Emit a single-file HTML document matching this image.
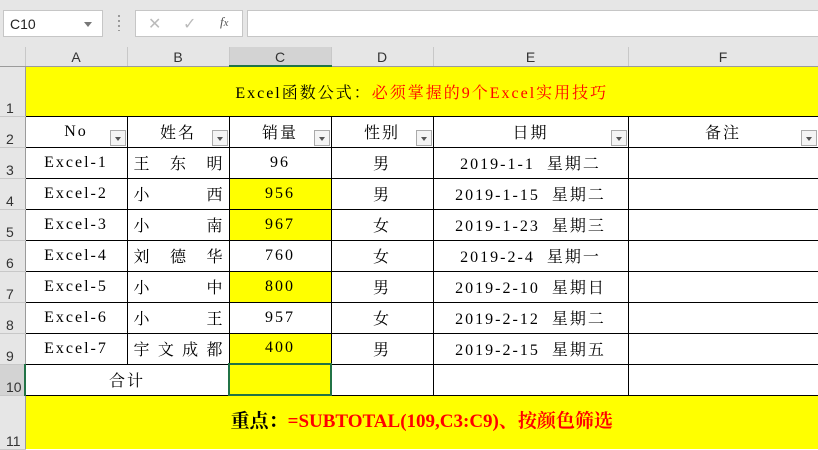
<!DOCTYPE html>
<html><head><meta charset="utf-8"><style>
*{margin:0;padding:0;box-sizing:border-box}
body{width:818px;height:449px;overflow:hidden;background:#fff;position:relative;font-family:"Liberation Serif","Noto Serif CJK SC",serif}
.top{position:absolute;left:0;top:0;width:818px;height:48px;background:#e6e6e6}
.nb{position:absolute;left:3px;top:10px;width:100px;height:27px;background:#fff;border:1px solid #c6c6c6;font:14px "Liberation Sans",sans-serif;padding:5px 0 0 6px;color:#222}
.nb:after{content:"";position:absolute;right:10px;top:11px;border:4px solid transparent;border-top:5px solid #777}
.dots{position:absolute;left:118px;top:15px;width:2px;height:16px;background:repeating-linear-gradient(#999 0 2px,transparent 2px 5px)}
.fb{position:absolute;left:135px;top:10px;width:108px;height:27px;background:#fff;border:1px solid #c6c6c6;color:#bbb;font:16px "Liberation Sans",sans-serif}
.fi{position:absolute;left:247px;top:10px;width:575px;height:27px;background:#fff;border:1px solid #c6c6c6}
table{position:absolute;left:0;top:47px;border-collapse:collapse;table-layout:fixed;width:818px}
td{font-size:16px;text-align:center;vertical-align:middle;white-space:nowrap;letter-spacing:2px;position:relative;padding:0}
.ch td{height:18px;background:#e6e6e6;font:14px "Liberation Sans",sans-serif;letter-spacing:0;color:#333;border-right:1px solid #c8c8c8;border-bottom:1px solid #9b9b9b;padding-top:2px}
.ch td.sel{background:#d3d3d3;border-bottom:2px solid #217346}
td.rh{background:#e6e6e6;font:14px "Liberation Sans",sans-serif;letter-spacing:0;color:#333;border-right:1px solid #9b9b9b;border-bottom:1px solid #c8c8c8;vertical-align:bottom;text-align:left;padding-left:6px}
td.rh.sel{background:#d3d3d3;border-right:2px solid #217346}
.d td.c{border:1px solid #000}
.y{background:#ff0}
.r{color:#f00}
.fl{position:absolute;right:1px;bottom:1px;width:16px;height:16px;border:1px solid #aaa;background:#f4f4f4}
.fl:after{content:"";position:absolute;left:4px;top:6px;border:3px solid transparent;border-top:4px solid #555}
.nm{text-align:justify;text-align-last:justify;padding:0 6px;letter-spacing:0}
</style></head><body>
<div class="top"></div>
<div class="nb">C10</div>
<div class="dots"></div>
<div class="fb"><span style="position:absolute;left:12px;top:3px">✕</span><span style="position:absolute;left:47px;top:3px">✓</span><span style="position:absolute;left:84px;top:3px;color:#555;font:italic 13px 'Liberation Serif',serif">f<small>x</small></span></div>
<div class="fi"></div>
<table>
<colgroup><col style="width:25px"><col style="width:102px"><col style="width:102px"><col style="width:102px"><col style="width:102px"><col style="width:195px"><col style="width:190px"></colgroup>
<tr class="ch"><td style="border-bottom:1px solid #9b9b9b"></td><td>A</td><td>B</td><td class="sel">C</td><td>D</td><td>E</td><td>F</td></tr>
<tr style="height:50px"><td class="rh">1</td><td colspan="6" class="y" style="border-bottom:1px solid #000">Excel函数公式：<span class="r">必须掌握的9个Excel实用技巧</span></td></tr>
<tr class="d" style="height:31px"><td class="rh">2</td><td class="c">No<div class="fl"></div></td><td class="c">姓名<div class="fl"></div></td><td class="c">销量<div class="fl"></div></td><td class="c">性别<div class="fl"></div></td><td class="c">日期<div class="fl"></div></td><td class="c">备注<div class="fl"></div></td></tr>
<tr class="d" style="height:31px"><td class="rh">3</td><td class="c">Excel-1</td><td class="c nm">王 东 明</td><td class="c">96</td><td class="c">男</td><td class="c">2019-1-1 &nbsp;星期二</td><td class="c"></td></tr>
<tr class="d" style="height:31px"><td class="rh">4</td><td class="c">Excel-2</td><td class="c nm">小 西</td><td class="c y">956</td><td class="c">男</td><td class="c">2019-1-15 &nbsp;星期二</td><td class="c"></td></tr>
<tr class="d" style="height:31px"><td class="rh">5</td><td class="c">Excel-3</td><td class="c nm">小 南</td><td class="c y">967</td><td class="c">女</td><td class="c">2019-1-23 &nbsp;星期三</td><td class="c"></td></tr>
<tr class="d" style="height:31px"><td class="rh">6</td><td class="c">Excel-4</td><td class="c nm">刘 德 华</td><td class="c">760</td><td class="c">女</td><td class="c">2019-2-4 &nbsp;星期一</td><td class="c"></td></tr>
<tr class="d" style="height:31px"><td class="rh">7</td><td class="c">Excel-5</td><td class="c nm">小 中</td><td class="c y">800</td><td class="c">男</td><td class="c">2019-2-10 &nbsp;星期日</td><td class="c"></td></tr>
<tr class="d" style="height:31px"><td class="rh">8</td><td class="c">Excel-6</td><td class="c nm">小 王</td><td class="c">957</td><td class="c">女</td><td class="c">2019-2-12 &nbsp;星期二</td><td class="c"></td></tr>
<tr class="d" style="height:31px"><td class="rh">9</td><td class="c">Excel-7</td><td class="c nm">宇 文 成 都</td><td class="c y">400</td><td class="c">男</td><td class="c">2019-2-15 &nbsp;星期五</td><td class="c"></td></tr>
<tr class="d" style="height:31px"><td class="rh sel">10</td><td class="c" colspan="2">合计</td><td class="c y" style="border:2px solid #217346"></td><td class="c"></td><td class="c"></td><td class="c"></td></tr>
<tr style="height:54px"><td class="rh">11</td><td colspan="6" class="y" style="font-weight:bold;font-size:19px;letter-spacing:0;padding-bottom:6px">重点：<span class="r">=SUBTOTAL(109,C3:C9)、按颜色筛选</span></td></tr>
</table>
</body></html>
